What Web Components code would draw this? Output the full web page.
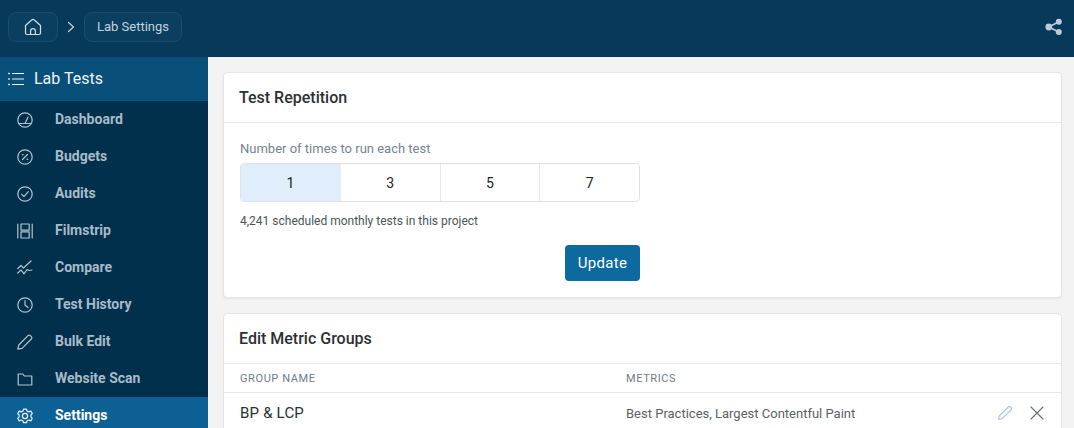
<!DOCTYPE html>
<html>
<head>
<meta charset="utf-8">
<title>Lab Settings</title>
<style>
  html, body { margin: 0; height: 428px; overflow: hidden; background: #f3f3f3; font-family: Roboto, "Liberation Sans", sans-serif; }
  body { display: flex; flex-direction: column; }
</style>
</head>
<body>
<top-bar></top-bar>
<div style="display:flex;flex:1;min-height:0">
  <side-nav></side-nav>
  <main style="flex:1;min-width:0;padding:15px 12px 0 15px;display:flex;flex-direction:column;gap:15px;overflow:hidden">
    <repeat-card></repeat-card>
    <metric-card></metric-card>
  </main>
</div>

<script>
const STROKE = 'fill="none" stroke="currentColor" stroke-width="1.2" stroke-linecap="round" stroke-linejoin="round"';

class topBar extends HTMLElement {
    constructor() {
        super();
        this.attachShadow({ mode: 'open' });
        this.shadowRoot.innerHTML = `<style>
        :host { display: flex; align-items: center; height: 57px; flex: none; background: #06395a; padding: 0 11px 3px 8px; box-sizing: border-box; color: #c5d2dc; }
        .crumb { display: flex; align-items: center; justify-content: center; height: 30px; box-sizing: border-box; border: 1px solid #1a4d6e; border-radius: 8px; background: #0a3f60; font-size: 13px; padding-bottom: 1px; }
        .home { width: 50px; color: #d3dee6; padding-bottom: 0; }
        .label { width: 98px; }
        .sep { width: 26px; display: flex; justify-content: center; }
        .share { margin-left: auto; color: #bccbd6; display: flex; }
        </style>
        <div class="crumb home"><svg width="18" height="18" viewBox="0 0 18 18" ${STROKE}><path d="M1.5 15V7.500L7.600 2a2 2 0 0 1 2.800 0l6.100 5.500V15a1.500 1.500 0 0 1-1.500 1.500H3A1.500 1.500 0 0 1 1.500 15z"/><path d="M6.600 16.500v-3.400a2.400 2.400 0 0 1 4.800 0v3.400"/></svg></div>
        <div class="sep"><svg width="8" height="12" viewBox="0 0 8 12" ${STROKE}><path d="M1.500 1.500 6.500 6l-5 4.500"/></svg></div>
        <div class="crumb label">Lab Settings</div>
        <div class="share"><svg width="18" height="18" viewBox="0 0 18 18" fill="currentColor"><circle cx="3.800" cy="9" r="3.400"/><circle cx="13.800" cy="3.800" r="3"/><circle cx="13.800" cy="14" r="3"/><path d="M3.800 9 13.800 3.800M3.800 9l10 5" stroke="currentColor" stroke-width="1.600"/></svg></div>`;
    }
}

class navItem extends HTMLElement {
    constructor() {
        super();
        this.attachShadow({ mode: 'open' });
    }

    connectedCallback() {
        const active = this.hasAttribute('active');
        this.shadowRoot.innerHTML = `<style>
        :host { display: flex; align-items: center; height: 37px; flex: none; padding: 0 0 2px 17px; box-sizing: border-box; font-size: 14px; font-weight: 700; color: ${active ? '#fff' : '#a9bbc8'}; background: ${active ? '#0d6094' : 'transparent'}; }
        .icon { width: 16px; height: 16px; margin: 2px 22px 0 0; display: flex; color: ${active ? '#e6eef4' : '#b4c4cf'}; }
        </style>
        <span class="icon"><svg width="16" height="16" viewBox="0 0 16 16" ${STROKE}>${this.getAttribute('icon')}</svg></span><slot></slot>`;
    }
}

class sideNav extends HTMLElement {
    constructor() {
        super();
        this.attachShadow({ mode: 'open' });
        this.shadowRoot.innerHTML = `<style>
        :host { display: flex; flex-direction: column; width: 208px; flex: none; background: #00304c; overflow: hidden; }
        .head { display: flex; align-items: center; height: 44px; flex: none; box-sizing: border-box; padding: 0 0 2px 8px; background: #084f7a; color: #f0f5f8; font-size: 16px; }
        .head svg { margin: 2px 10px 0 0; }
        </style>
        <div class="head"><svg width="16" height="16" viewBox="0 0 16 16" ${STROKE}><path d="M4.500 2.500h11M4.500 8h11M4.500 13.500h11"/><path d="M.8 2.500h.4M.8 8h.4M.8 13.500h.4" stroke-width="1.600"/></svg>Lab Tests</div>
        <slot></slot>`;
    }
}

class repeatCard extends HTMLElement {
    constructor() {
        super();
        this.attachShadow({ mode: 'open' });
        this.shadowRoot.innerHTML = `<style>
        :host { display: block; flex: none; height: 226px; box-sizing: border-box; background: #fff; border: 1px solid #e2e4e6; border-radius: 4px; box-shadow: 0 1px 2px rgba(0,0,0,.06); }
        h2 { margin: 0; height: 49px; line-height: 49px; padding-left: 15px; font-size: 16px; font-weight: 500; color: #2b3033; border-bottom: 1px solid #e6e8ea; }
        .body { width: 400px; margin-left: 16px; }
        .lab { margin-top: 18px; font-size: 13px; line-height: 15px; color: #748492; }
        .seg { display: flex; height: 39px; margin-top: 7px; box-sizing: border-box; border: 1px solid #dfe2e5; border-radius: 4px; overflow: hidden; }
        .seg div { flex: 1; display: flex; align-items: center; justify-content: center; font-size: 14px; color: #1c2226; border-right: 1px solid #e6e8ea; }
        .seg div:first-child { background: #e0eefc; border-right-color: #e0eefc; }
        .seg div:last-child { border-right: 0; }
        .note { margin-top: 12px; font-size: 12px; line-height: 14px; color: #4d5459; }
        .row { display: flex; justify-content: flex-end; margin-top: 17px; }
        button { width: 75px; height: 36px; border: 0; border-radius: 4px; background: #0d6a9e; color: #fff; font: 400 15px Roboto, sans-serif; letter-spacing: .3px; padding: 0; }
        </style>
        <h2>Test Repetition</h2>
        <div class="body">
          <div class="lab">Number of times to run each test</div>
          <div class="seg"><div>1</div><div>3</div><div>5</div><div>7</div></div>
          <div class="note">4,241 scheduled monthly tests in this project</div>
          <div class="row"><button>Update</button></div>
        </div>`;
    }
}

class metricCard extends HTMLElement {
    constructor() {
        super();
        this.attachShadow({ mode: 'open' });
        this.shadowRoot.innerHTML = `<style>
        :host { display: block; flex: none; background: #fff; border: 1px solid #e2e4e6; border-radius: 4px; height: 200px; box-sizing: border-box; }
        h2 { margin: 0; height: 49px; line-height: 49px; padding-left: 15px; font-size: 16px; font-weight: 500; color: #2b3033; border-bottom: 1px solid #e6e8ea; }
        .row { display: grid; grid-template-columns: 386px 1fr auto; align-items: center; padding: 0 16px; }
        .th { height: 28px; border-bottom: 1px solid #e6e8ea; font-size: 11px; color: #6f7c87; letter-spacing: .6px; }
        .td { height: 40px; font-size: 13px; color: #5b6167; }
        .name { font-size: 15px; letter-spacing: .2px; color: #2a2f33; }
        .acts { display: flex; gap: 16px; align-items: center; }
        </style>
        <h2>Edit Metric Groups</h2>
        <div class="row th"><span>GROUP NAME</span><span>METRICS</span><span></span></div>
        <div class="row td"><span class="name">BP &amp; LCP</span><span>Best Practices, Largest Contentful Paint</span>
          <span class="acts">
            <svg width="16" height="16" viewBox="0 0 16 16" fill="none" stroke="#a9c0de" stroke-width="1.1" stroke-linejoin="round"><path d="M1.500 14.500l.8-3.600L11.200 2a1.600 1.600 0 0 1 2.300 0l.5.5a1.600 1.600 0 0 1 0 2.300l-8.900 8.900z"/></svg>
            <svg width="16" height="16" viewBox="0 0 16 16" fill="none" stroke="#6b7075" stroke-width="1.1" stroke-linecap="round"><path d="M2 2l12 12M14 2 2 14"/></svg>
          </span></div>`;
    }
}

customElements.define('top-bar', topBar);
customElements.define('nav-item', navItem);
customElements.define('side-nav', sideNav);
customElements.define('repeat-card', repeatCard);
customElements.define('metric-card', metricCard);

// nav entries: label + svg guts
const items = [
    ['Dashboard', '<circle cx="8" cy="8" r="7.200"/><path d="M1.500 11.500h13M8 11.500 11 5"/>'],
    ['Budgets', '<circle cx="8" cy="8" r="7.200"/><path d="M5.500 10.500l5-5"/><path d="M5.600 5.800h.3M10.200 10.200h.3" stroke-width="1.600"/>'],
    ['Audits', '<circle cx="8" cy="8" r="7.200"/><path d="M4.800 8.300l2.200 2.300 4.300-5"/>'],
    ['Filmstrip', '<path d="M.8 1v14M15.200 1v14"/><rect x="4" y="1" width="8.200" height="6.200"/><rect x="4" y="8.800" width="8.200" height="6.200"/>'],
    ['Compare', '<path d="M.8 8.500 4 5.500l2.500 2.500L14 1"/><path d="M.8 13 4 9.800l3 4 3-4.300 2 1 3-.5"/>'],
    ['Test History', '<circle cx="8" cy="8" r="7.200"/><path d="M8 3.500V8l3 2.500"/>'],
    ['Bulk Edit', '<path d="M.8 15.200l1-4.200L11 1.600a1.600 1.600 0 0 1 2.300 0l1.100 1.100a1.600 1.600 0 0 1 0 2.300L5 14.400z"/>'],
    ['Website Scan', '<path d="M1.200 3h4.600l1.500 2h7.500v9H1.200z"/>'],
    ['Settings', '<path d="M6.500 1.200H9.500L10.100 3.100 12 3.900 13.800 3 15.300 5.600 13.900 7V8.900L15.300 10.300 13.800 12.900 12 12 10.100 12.800 9.500 14.700H6.500L5.900 12.800 4 12 2.200 12.900 .7 10.300 2.100 8.900V7L.7 5.600 2.200 3 4 3.900 5.900 3.100Z"/><circle cx="8" cy="8" r="2.600"/>']
];
const nav = document.querySelector('side-nav');
items.forEach(([label, icon]) => {
    const el = document.createElement('nav-item');
    el.setAttribute('icon', icon);
    if (label === 'Settings') el.setAttribute('active', '');
    el.textContent = label;
    nav.appendChild(el);
});
</script>
</body>
</html>
